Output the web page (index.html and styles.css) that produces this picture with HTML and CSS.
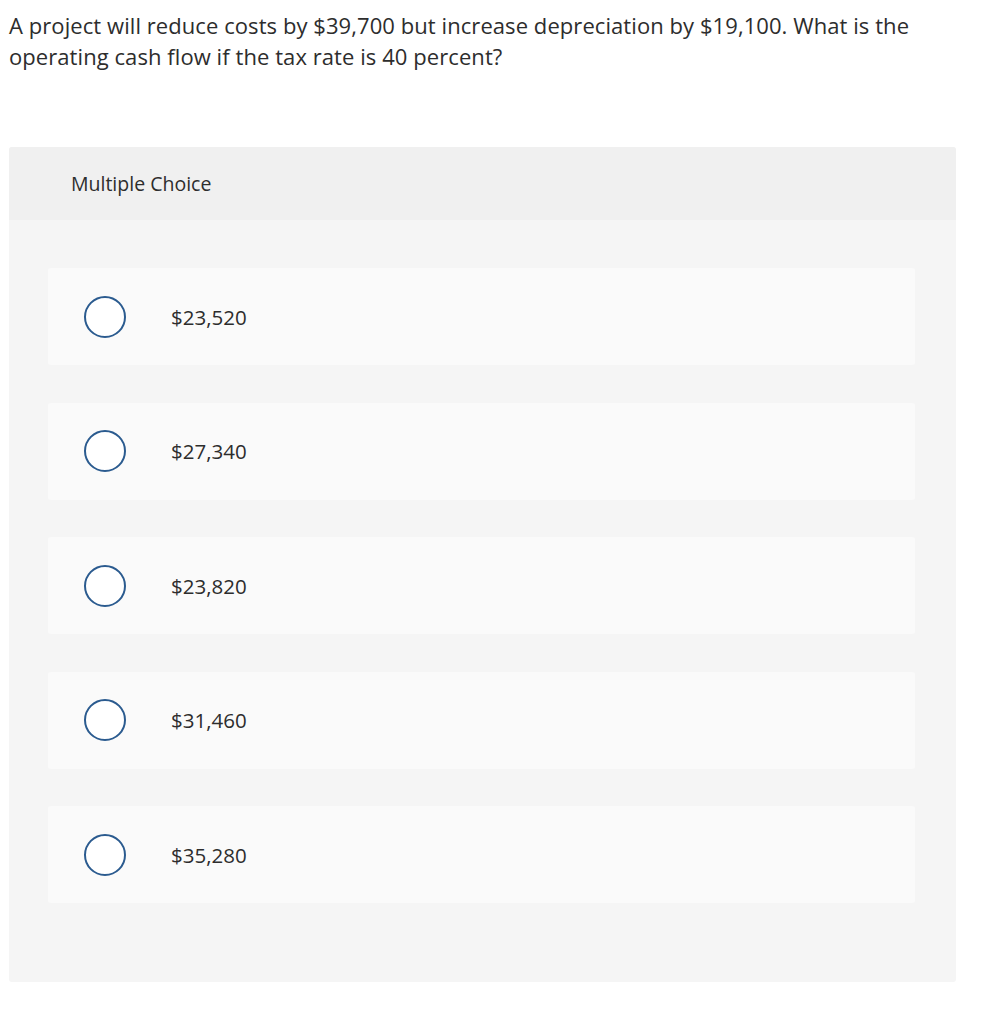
FILE: index.html
```html
<!DOCTYPE html>
<html>
<head>
<meta charset="utf-8">
<link rel="stylesheet" href="styles.css">
</head>
<body>
<p class="question">A project will reduce costs by $39,700 but increase depreciation by $19,100. What is the operating cash flow if the tax rate is 40 percent?</p>
<div class="mc">
  <div class="mc-header">Multiple Choice</div>
  <div class="mc-body">
    <div class="option"><span class="radio"></span><span class="label">$23,520</span></div>
    <div class="option"><span class="radio"></span><span class="label">$27,340</span></div>
    <div class="option"><span class="radio"></span><span class="label">$23,820</span></div>
    <div class="option"><span class="radio"></span><span class="label">$31,460</span></div>
    <div class="option"><span class="radio"></span><span class="label">$35,280</span></div>
  </div>
</div>
</body>
</html>
```
FILE: styles.css
```css
html, body {
  margin: 0;
  padding: 0;
  background: #ffffff;
}
body {
  font-family: "Open Sans", "Liberation Sans", sans-serif;
  color: #2d2d2d;
}
.question {
  margin: 0;
  padding: 10px 0 0 9px;
  width: 930px;
  font-size: 22px;
  line-height: 31px;
  letter-spacing: 0.07px;
}
.mc {
  margin: 75px 0 0 9px;
  width: 947px;
  border-radius: 3px;
  overflow: hidden;
  background: #f5f5f5;
}
.mc-header {
  height: 73px;
  background: #f0f0f0;
  padding-left: 62px;
  display: flex;
  align-items: center;
  font-size: 19.5px;
}
.mc-body {
  padding: 48px 41px 79px 39px;
  display: flex;
  flex-direction: column;
  gap: 37.5px;
}
.option {
  height: 97px;
  background: #fafafa;
  border-radius: 3px;
  display: flex;
  align-items: center;
  padding-left: 36px;
}
.radio {
  width: 38px;
  height: 38px;
  border: 2px solid #2b5b8f;
  border-radius: 50%;
  background: #ffffff;
  flex: none;
}
.label {
  margin-left: 45px;
  font-size: 20.5px;
}
```
